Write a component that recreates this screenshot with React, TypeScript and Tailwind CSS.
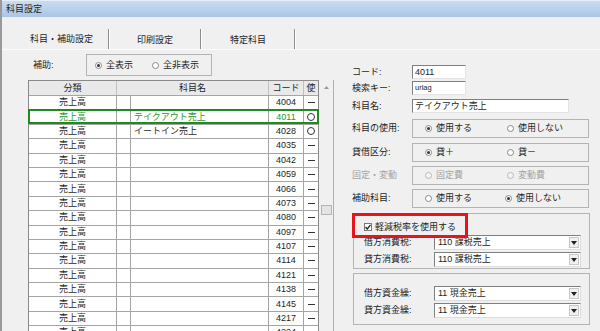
import React from 'react'

const rows: [string, string, 'o' | '-'][] = [
  ['4004', '', '-'],
  ['4011', 'テイクアウト売上', 'o'],
  ['4028', 'イートイン売上', 'o'],
  ['4035', '', '-'],
  ['4042', '', '-'],
  ['4059', '', '-'],
  ['4066', '', '-'],
  ['4073', '', '-'],
  ['4080', '', '-'],
  ['4097', '', '-'],
  ['4107', '', '-'],
  ['4114', '', '-'],
  ['4121', '', '-'],
  ['4138', '', '-'],
  ['4145', '', '-'],
  ['4217', '', '-'],
  ['4224', '', '-'],
]

function Radio({ checked, disabled }: { checked?: boolean; disabled?: boolean }) {
  return (
    <span
      className={`w-[7px] h-[7px] rounded-full border flex items-center justify-center shrink-0 ${
        disabled ? 'border-[#b8b8b8] bg-[#f4f4f4]' : 'border-[#8a8a8a] bg-white'
      }`}
    >
      {checked && <span className="w-[3px] h-[3px] rounded-full bg-[#333]" />}
    </span>
  )
}

function RadioBox({
  items,
  disabled,
  second = 94,
}: {
  items: [string, boolean][]
  disabled?: boolean
  second?: number
}) {
  return (
    <div className="w-[177px] h-[19px] border border-[#b4b4b4] flex items-center pl-[12px]">
      {items.map(([label, checked], i) => (
        <div
          key={label}
          className={`flex items-center gap-[4px] ${disabled ? 'text-[#a3a3a3]' : ''}`}
          style={i === 0 ? { width: second - 12 } : undefined}
        >
          <Radio checked={checked} disabled={disabled} />
          <span>{label}</span>
        </div>
      ))}
    </div>
  )
}

function Input({ value, w, small }: { value: string; w: string; small?: boolean }) {
  return (
    <div
      className={`${w} h-[14px] bg-white border-t border-l border-[#7f7f7f] border-r-[#e3e3e3] border-b-[#e3e3e3] border-r border-b flex items-center pl-[2px] ${
        small ? 'text-[7.5px]' : ''
      }`}
    >
      {value}
    </div>
  )
}

function Select({ value }: { value: string }) {
  return (
    <div className="w-[147px] h-[15px] bg-white border-t border-l border-[#7f7f7f] border-r border-b border-r-[#dcdcdc] border-b-[#dcdcdc] flex items-center">
      <span className="flex-1 pl-[3px]">{value}</span>
      <span className="w-[10px] h-[11px] mr-[1px] bg-[#f0f0f0] border border-[#c8c8c8] flex items-center justify-center">
        <svg width="6" height="4" viewBox="0 0 6 4">
          <path d="M0 0h6L3 4z" fill="#222" />
        </svg>
      </span>
    </div>
  )
}

function Row({ label, children, gray }: { label: string; children: React.ReactNode; gray?: boolean }) {
  return (
    <div className="flex items-center">
      <span className={`w-[60px] ${gray ? 'text-[#a3a3a3]' : ''}`}>{label}</span>
      {children}
    </div>
  )
}

export default function App() {
  return (
    <div className="w-[600px] h-[331px] overflow-hidden bg-[#f0f0f0] border-l-2 border-[#9a9a9a] text-[9px] leading-none text-[#1e1e1e] font-['Liberation_Sans','Noto_Sans_CJK_JP',sans-serif]">
      {/* title bar */}
      <div className="h-[18px] border-t border-[#6a6a6a] bg-gradient-to-b from-[#cadcf1] to-[#a9c6e7] flex items-center pl-[4px] border-b border-[#e6eef8]">
        科目設定
      </div>

      {/* tabs */}
      <div className="h-[32px] flex pl-[13px] border-b border-[#fbfbfb]">
        {[
          ['科目・補助設定', 'w-[95px]'],
          ['印刷設定', 'w-[92px]'],
          ['特定科目', 'w-[94px]'],
        ].map(([t, w], i) => (
          <div key={t} className={`${w} flex items-end`}>
            <div className="flex-1 h-[32px] flex items-center justify-center pt-[15px]">
              <span className={i === 0 ? '-mt-[2px]' : ''}>{t}</span>
            </div>
            <div className="w-[2px] h-[20px] border-l border-[#8c8c8c] border-r border-r-white" />
          </div>
        ))}
      </div>

      <div className="flex">
        {/* left panel */}
        <div className="w-[334px] pl-[26px]">
          <div className="flex items-center mt-[4px] h-[22px]">
            <span className="w-[58px] pl-[5px]">補助:</span>
            <div className="w-[126px] h-[22px] border border-[#b4b4b4] flex items-center pl-[8px]">
              <div className="flex items-center gap-[4px] w-[57px]">
                <Radio checked />
                <span>全表示</span>
              </div>
              <div className="flex items-center gap-[4px]">
                <Radio />
                <span>全非表示</span>
              </div>
            </div>
          </div>

          <div className="flex mt-[4px]">
            <div className="w-[291px] border-l border-t border-r border-[#8a8a8a] bg-white">
              <div className="flex h-[15px] bg-[#e9e9e9] border-b border-[#a5a5a5]">
                <div className="w-[88px] border-r border-[#c0c0c0] flex items-center justify-center">分類</div>
                <div className="w-[152px] border-r border-[#c0c0c0] flex items-center justify-center">科目名</div>
                <div className="w-[35px] border-r border-[#c0c0c0] flex items-center justify-center">コード</div>
                <div className="flex-1 flex items-center justify-center">使</div>
              </div>
              {rows.map(([code, name, use], i) => {
                const sel = i === 1
                return (
                  <div
                    key={code}
                    className={`relative flex h-[14.4px] border-b border-[#a5a5a5] ${sel ? 'text-[#2e962e]' : ''}`}
                  >
                    <div className="w-[88px] border-r border-[#a5a5a5] flex items-center justify-center">売上高</div>
                    <div className="w-[14px] border-r border-[#a5a5a5]" />
                    <div className="w-[138px] border-r border-[#a5a5a5] flex items-center pl-[3px]">{name}</div>
                    <div className="w-[35px] border-r border-[#a5a5a5] flex items-center justify-center">{code}</div>
                    <div className="flex-1 flex items-center justify-center">
                      {use === 'o' ? (
                        <span className="w-[8px] h-[8px] rounded-full border border-[#333]" />
                      ) : (
                        <span className="w-[7px] h-px bg-[#333]" />
                      )}
                    </div>
                    {sel && <span className="absolute -left-[1px] -right-[1px] -top-[1px] -bottom-[0px] border-2 border-[#1f8a1f]" />}
                  </div>
                )
              })}
            </div>

            {/* scrollbar */}
            <div className="w-[15px] h-[260px] border-r border-[#b0b0b0] bg-[#f0f0f0] flex flex-col items-center">
              <div className="h-[15px] w-full flex items-center justify-center">
                <svg width="5" height="3" viewBox="0 0 5 3">
                  <path d="M0 3h5L2.5 0z" fill="#9a9a9a" />
                </svg>
              </div>
              <div className="mt-[110px] w-[11px] h-[10px] bg-[#e4e4e4] border border-[#b4b4b4]" />
            </div>
          </div>
        </div>

        {/* right panel */}
        <div className="flex-1 pl-[16px]">
          <div className="mt-[15px]">
            <Row label="コード:">
              <Input value="4011" w="w-[54px]" />
            </Row>
          </div>
          <div className="mt-[2px]">
            <Row label="検索キー:">
              <Input value="urlag" w="w-[54px]" small />
            </Row>
          </div>
          <div className="mt-[4px]">
            <Row label="科目名:">
              <Input value="テイクアウト売上" w="w-[157px]" />
            </Row>
          </div>
          <div className="mt-[6px]">
            <Row label="科目の使用:">
              <RadioBox items={[['使用する', true], ['使用しない', false]]} />
            </Row>
          </div>
          <div className="mt-[5px]">
            <Row label="貸借区分:">
              <RadioBox items={[['貸＋', true], ['貸－', false]]} />
            </Row>
          </div>
          <div className="mt-[4px]">
            <Row label="固定・変動" gray>
              <RadioBox items={[['固定費', false], ['変動費', false]]} disabled />
            </Row>
          </div>
          <div className="mt-[4px]">
            <Row label="補助科目:">
              <RadioBox items={[['使用する', false], ['使用しない', true]]} second={92} />
            </Row>
          </div>

          {/* tax group */}
          <div className="relative ml-[1px] mt-[5px] w-[237px] h-[56px] border border-[#b4b4b4] pl-[10px]">
            <div className="flex items-center gap-[3px] mt-[8px] h-[10px]">
              <span className="w-[8px] h-[8px] bg-white border border-[#7a7a7a] flex items-center justify-center">
                <svg width="6" height="6" viewBox="0 0 6 6">
                  <path d="M0.5 3l1.8 2L5.5 0.8" stroke="#222" strokeWidth="1.3" fill="none" />
                </svg>
              </span>
              <span>軽減税率を使用する</span>
            </div>
            <div className="mt-[3px] flex items-center">
              <span className="w-[70px]">借方消費税:</span>
              <Select value="110 課税売上" />
            </div>
            <div className="mt-[2px] flex items-center">
              <span className="w-[70px]">貸方消費税:</span>
              <Select value="110 課税売上" />
            </div>
            <span className="absolute -left-[2px] -top-[1px] w-[116px] h-[25px] border-[3px] border-[#e8141b]" />
          </div>

          {/* cash group */}
          <div className="ml-[1px] mt-[4px] w-[237px] h-[52px] border border-[#b4b4b4] pl-[10px] pt-[12px]">
            <div className="flex items-center">
              <span className="w-[70px]">借方資金繰:</span>
              <Select value="11 現金売上" />
            </div>
            <div className="mt-[2px] flex items-center">
              <span className="w-[70px]">貸方資金繰:</span>
              <Select value="11 現金売上" />
            </div>
          </div>
        </div>
      </div>
    </div>
  )
}
